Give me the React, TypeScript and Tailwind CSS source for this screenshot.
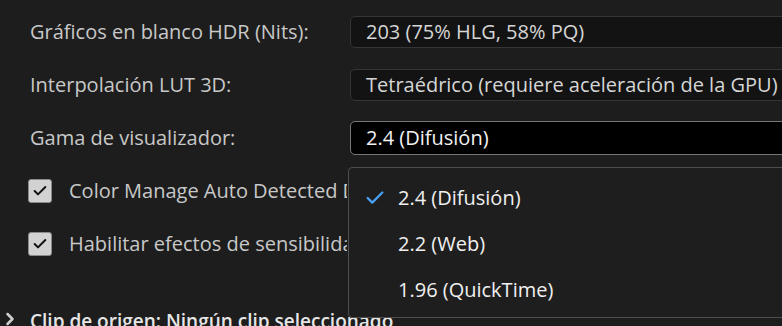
import React from "react";
import { Check, ChevronRight } from "lucide-react";

const font = { fontFamily: '"Open Sans", "Liberation Sans", sans-serif' };

function Field({ value, active }: { value: string; active?: boolean }) {
  return (
    <div
      className={
        active
          ? "flex h-[34px] w-[460px] shrink-0 items-center rounded-[5px] border border-[#767676] bg-black pl-[15px] text-[20px] text-[#f2f2f2]"
          : "flex h-[32px] w-[460px] shrink-0 items-center rounded-[5px] border border-[#353535] bg-[#131313] pl-[15px] text-[20px] text-[#d6d6d6]"
      }
    >
      {value}
    </div>
  );
}

function CheckBox({ label }: { label: string }) {
  return (
    <div className="flex h-[53px] items-center pl-[28px]">
      <div className="flex h-[24px] w-[24px] shrink-0 items-center justify-center rounded-[3px] border border-[#8a8a8a] bg-[#d2d2d2]">
        <Check size={16} strokeWidth={3} className="text-[#111]" />
      </div>
      <span className="ml-[17px] w-[278px] overflow-hidden whitespace-nowrap text-[20px] text-[#c8c8c8]">
        {label}
      </span>
    </div>
  );
}

function Row({ label, children }: { label: string; children: React.ReactNode }) {
  return (
    <div className="flex h-[53px] items-center">
      <span className="w-[350px] shrink-0 pl-[30px] text-[20px] text-[#c8c8c8]">{label}</span>
      {children}
    </div>
  );
}

export default function App() {
  const options = ["2.4 (Difusión)", "2.2 (Web)", "1.96 (QuickTime)"];

  return (
    <div className="relative h-[326px] w-[782px] overflow-hidden bg-[#1d1d1d]" style={font}>
      <div className="flex flex-col pt-[5px]">
        <Row label="Gráficos en blanco HDR (Nits):">
          <Field value="203 (75% HLG, 58% PQ)" />
        </Row>
        <Row label="Interpolación LUT 3D:">
          <Field value="Tetraédrico (requiere aceleración de la GPU)" />
        </Row>
        <Row label="Gama de visualizador:">
          <Field value="2.4 (Difusión)" active />
        </Row>
        <CheckBox label="Color Manage Auto Detected Displays" />
        <CheckBox label="Habilitar efectos de sensibilidad a la pantalla" />
        <div className="mt-[42px] flex items-start">
          <ChevronRight size={20} strokeWidth={3} className="-mt-[3px] mr-[10px] shrink-0 text-[#d0d0d0]" />
          <span className="whitespace-nowrap text-[19px] font-semibold leading-none text-[#e6e6e6]">
            Clip de origen: Ningún clip seleccionado
          </span>
        </div>
      </div>

      <div className="absolute left-[348px] top-[167px] h-[151px] w-[460px] rounded-[4px] border border-[#4e4e4e] bg-[#1e1e1e] pt-[7px]">
        {options.map((o, i) => (
          <div key={o} className="flex h-[46px] items-center">
            <div className="flex w-[49px] justify-end pr-[12px]">
              {i === 0 && <Check size={22} strokeWidth={2.5} className="text-[#4aa0f5]" />}
            </div>
            <span className="text-[20px] text-[#f0f0f0]">{o}</span>
          </div>
        ))}
      </div>
    </div>
  );
}
